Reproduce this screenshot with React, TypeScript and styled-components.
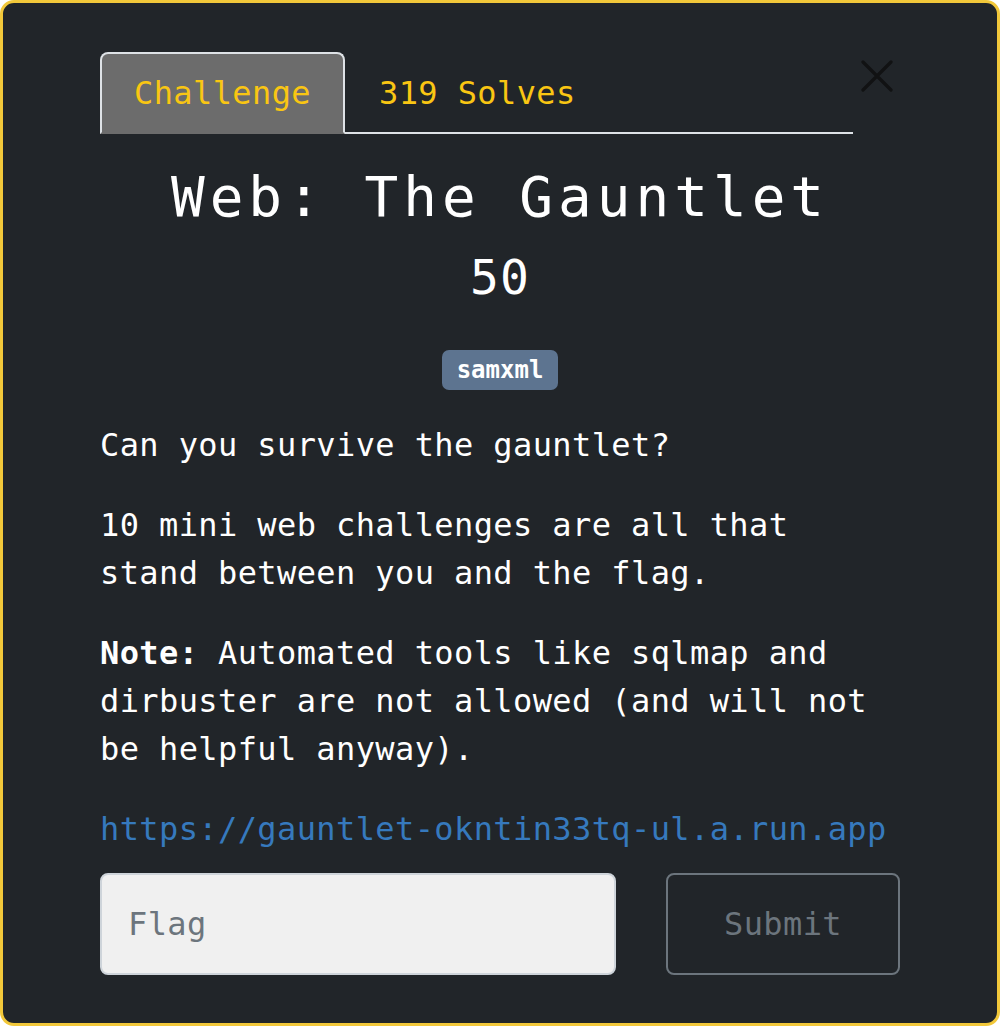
import { FC } from "react";
import styled, { createGlobalStyle } from "styled-components";

const GlobalStyle = createGlobalStyle`
  html, body {
    margin: 0;
    padding: 0;
    background: #ffffff;
  }
  * {
    box-sizing: border-box;
  }
`;

const StyledModal = styled.div`
  width: 1000px;
  height: 1026px;
  background-color: #212529;
  border: 3px solid #f2c83a;
  border-radius: 14px;
  padding: 49px 97px 0 97px;
  font-family: "DejaVu Sans Mono", "Liberation Mono", monospace;
  color: #ffffff;
  font-size: 32px;
  line-height: 1.5;
  letter-spacing: 0.4px;
`;

const StyledHeader = styled.div`
  display: flex;
  align-items: flex-start;
`;

const StyledNav = styled.div`
  flex: 1;
  display: flex;
  border-bottom: 2px solid #dee2e6;
`;

const StyledTab = styled.div<{ $active?: boolean }>`
  padding: 15px 32px;
  margin-bottom: -2px;
  color: #f9c613;
  border: 2px solid transparent;
  border-radius: 8px 8px 0 0;
  background-color: ${({ $active }) => ($active ? "#6c6c6c" : "transparent")};
  border-color: ${({ $active }) =>
    $active ? "#dee2e6 #dee2e6 #6c6c6c" : "transparent"};
`;

const StyledCloseButton = styled.button`
  width: 47px;
  height: 47px;
  padding: 0;
  border: none;
  background: transparent;
  display: flex;
  align-items: center;
  justify-content: center;
`;

const StyledTitle = styled.h3`
  margin: 29px 0 0 0;
  text-align: center;
  font-size: 56px;
  font-weight: 400;
  line-height: 1.2;
  letter-spacing: 5px;
`;

const StyledValue = styled.h4`
  margin: 19px 0 0 0;
  text-align: center;
  font-size: 48px;
  font-weight: 400;
  line-height: 1.2;
  letter-spacing: 1px;
`;

const StyledTagRow = styled.div`
  display: flex;
  justify-content: center;
  margin: 43px 0 31px 0;
`;

const StyledBadge = styled.span`
  display: inline-block;
  background-color: #5d7490;
  color: #ffffff;
  font-size: 24px;
  font-weight: 700;
  line-height: 1;
  letter-spacing: 0;
  padding: 8px 15px;
  border-radius: 7px;
`;

const StyledParagraph = styled.p`
  margin: 0 0 32px 0;
`;

const StyledLink = styled.a`
  color: #3679bd;
  text-decoration: none;
`;

const StyledForm = styled.div`
  display: grid;
  grid-template-columns: 1fr 234px;
  gap: 50px;
  margin-top: -12px;
`;

const StyledInput = styled.input`
  height: 102px;
  width: 100%;
  background-color: #f0f0f0;
  border: 2px solid #ced4da;
  border-radius: 8px;
  padding: 0 26px;
  font-family: inherit;
  font-size: 32px;
  letter-spacing: 0.4px;
  color: #212529;
  outline: none;
  &::placeholder {
    color: #6c757d;
  }
`;

const StyledSubmit = styled.button`
  height: 102px;
  background: transparent;
  border: 2px solid #6c757d;
  border-radius: 8px;
  color: #6c757d;
  font-family: inherit;
  font-size: 32px;
  letter-spacing: 0.4px;
`;

const CloseIcon: FC = () => (
  <svg width="32" height="32" viewBox="0 0 32 32">
    <path
      d="M2 2 L30 30 M30 2 L2 30"
      stroke="#111213"
      strokeWidth="3.2"
      strokeLinecap="round"
      fill="none"
    />
  </svg>
);

export const App: FC = () => {
  return (
    <>
      <GlobalStyle />
      <StyledModal>
        <StyledHeader>
          <StyledNav>
            <StyledTab $active>Challenge</StyledTab>
            <StyledTab>319 Solves</StyledTab>
          </StyledNav>
          <StyledCloseButton aria-label="Close">
            <CloseIcon />
          </StyledCloseButton>
        </StyledHeader>
        <StyledTitle>Web: The Gauntlet</StyledTitle>
        <StyledValue>50</StyledValue>
        <StyledTagRow>
          <StyledBadge>samxml</StyledBadge>
        </StyledTagRow>
        <StyledParagraph>Can you survive the gauntlet?</StyledParagraph>
        <StyledParagraph>
          10 mini web challenges are all that
          <br />
          stand between you and the flag.
        </StyledParagraph>
        <StyledParagraph>
          <strong>Note:</strong> Automated tools like sqlmap and
          <br />
          dirbuster are not allowed (and will not
          <br />
          be helpful anyway).
        </StyledParagraph>
        <StyledParagraph>
          <StyledLink href="#">https://gauntlet-okntin33tq-ul.a.run.app</StyledLink>
        </StyledParagraph>
        <StyledForm>
          <StyledInput placeholder="Flag" />
          <StyledSubmit>Submit</StyledSubmit>
        </StyledForm>
      </StyledModal>
    </>
  );
};

export default App;
